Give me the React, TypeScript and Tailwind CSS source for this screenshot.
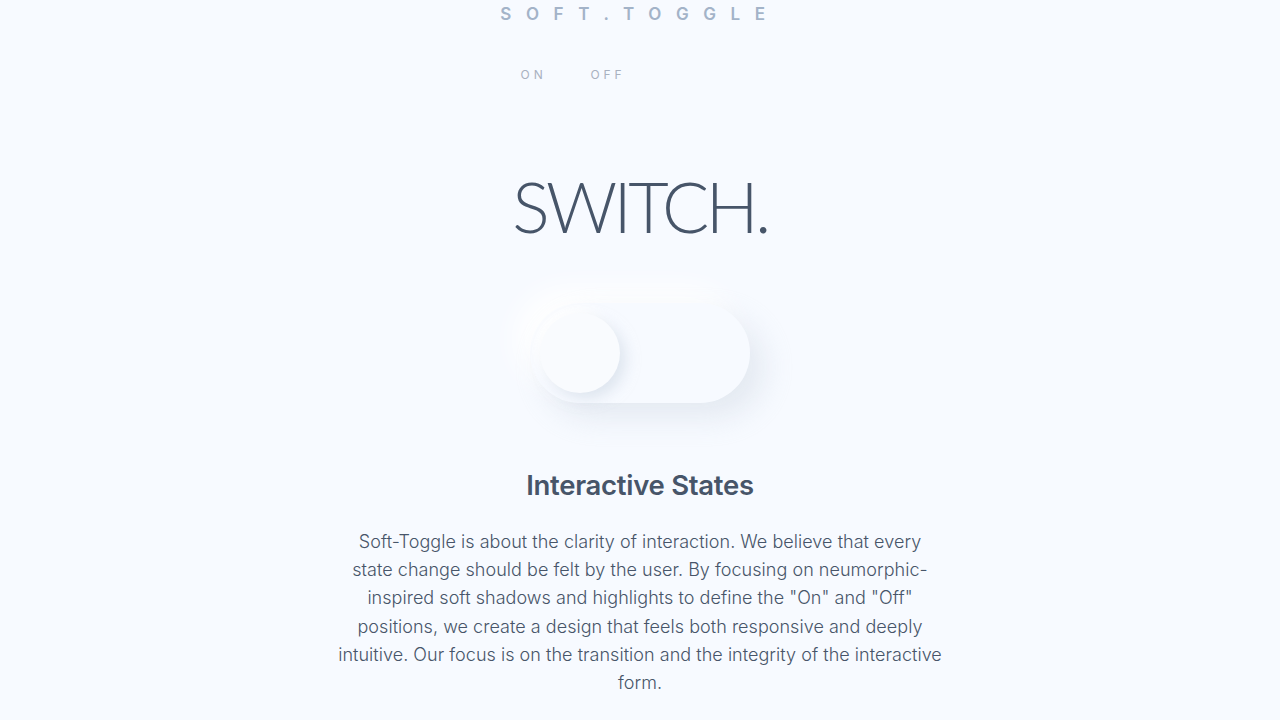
import React, { useState } from "react";

export default function App() {
  const [on, setOn] = useState(false);

  return (
    <main
      className="min-h-screen w-full bg-[#f7faff] text-[#475569] overflow-hidden"
      style={{ fontFamily: "Inter, 'Noto Sans', sans-serif" }}
    >
      {/* header */}
      <header className="flex flex-col items-center pt-[4px]">
        <div className="text-[17px] font-semibold tracking-[0.86em] text-[#a3b3c8] leading-[20px]">
          SOFT.TOGGLE
        </div>
        <nav className="mt-[42px] flex gap-[44px] text-[12px] tracking-[0.32em] text-[#a9b1bf] leading-[18px] mr-[134px]">
          <button onClick={() => setOn(true)}>ON</button>
          <button onClick={() => setOn(false)}>OFF</button>
        </nav>
      </header>

      <section className="flex flex-col items-center">
        <h1
          className="mt-[82px] text-[70px] font-light leading-[80px] tracking-[-0.052em] text-[#475569]"
          style={{ fontFamily: "Lato, Inter, sans-serif" }}
        >
          SWITCH.
        </h1>

        {/* toggle */}
        <button
          onClick={() => setOn(!on)}
          aria-label="toggle"
          className="mt-[57px] relative w-[220px] h-[100px] rounded-full bg-[#f7faff] shadow-[14px_14px_30px_rgba(203,213,225,0.45),-14px_-14px_30px_rgba(255,255,255,1)]"
        >
          <span
            className={
              on
                ? "absolute top-[10px] left-[130px] w-[80px] h-[80px] rounded-full bg-[#f9fbfe] shadow-[6px_6px_14px_rgba(203,213,225,0.55),-6px_-6px_14px_rgba(255,255,255,1)] transition-all duration-300"
                : "absolute top-[10px] left-[10px] w-[80px] h-[80px] rounded-full bg-[#f9fbfe] shadow-[6px_6px_14px_rgba(203,213,225,0.55),-6px_-6px_14px_rgba(255,255,255,1)] transition-all duration-300"
            }
          />
        </button>

        <h2 className="mt-[64px] text-[27.5px] font-semibold leading-[36px] text-[#475569] tracking-[-0.01em]">
          Interactive States
        </h2>
        <p className="mt-[25px] max-w-[640px] text-center text-[18px] font-light leading-[28.2px] text-[#475569] tracking-[0.002em]">
          Soft-Toggle is about the clarity of interaction. We believe that every
          <br />
          state change should be felt by the user. By focusing on neumorphic-
          <br />
          inspired soft shadows and highlights to define the "On" and "Off"
          <br />
          positions, we create a design that feels both responsive and deeply
          <br />
          intuitive. Our focus is on the transition and the integrity of the interactive
          <br />
          form.
        </p>
      </section>
    </main>
  );
}
